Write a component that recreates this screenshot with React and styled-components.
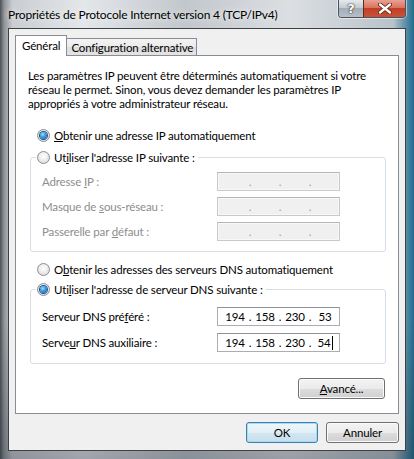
import React from "react";
import styled, { createGlobalStyle, css } from "styled-components";

const Global = createGlobalStyle`
  html, body { margin: 0; padding: 0; background: #ffffff; }
  body { font-family: "Lato", "Noto Sans", sans-serif; font-size: 11.5px; letter-spacing: -0.15px; color: #000; }
  * { box-sizing: border-box; }
`;

const Window = styled.div`
  width: 414px;
  height: 459px;
  display: flex;
  flex-direction: column;
  padding: 0 8px 8px 8px;
  background:
    linear-gradient(to bottom, rgba(255,255,255,0) 0%, rgba(255,255,255,0) 70%, rgba(30,40,50,0.35) 100%),
    linear-gradient(to right, #4d5155 0%, #8f9499 1%, #c9cdd1 3%, #e4e7ea 20%, #c2c7cc 45%, #dcdfe2 70%, #b9c3ca 95%, #5b8ea8 98%, #1f6c8c 100%);
`;

const TitleBar = styled.div`
  height: 28px;
  display: flex;
  align-items: flex-start;
  justify-content: space-between;
  flex-shrink: 0;
`;

const Title = styled.div`
  padding-top: 7px;
  font-size: 12px;
  letter-spacing: -0.2px;
  color: #000;
  text-shadow: 0 0 6px rgba(255,255,255,0.9);
  white-space: nowrap;
`;

const CaptionGroup = styled.div`
  display: flex;
  height: 18px;
  border: 1px solid #4a535c;
  border-top: none;
  border-radius: 0 0 4px 4px;
  overflow: hidden;
  box-shadow: 0 0 0 1px rgba(255,255,255,0.5);
`;

const CaptionButton = styled.div`
  display: flex;
  align-items: center;
  justify-content: center;
  height: 100%;
  width: ${(p) => p.$w}px;
  ${(p) =>
    p.$close
      ? css`
          background: linear-gradient(to bottom, #e8a192 0%, #d8735f 45%, #c23f22 50%, #c8523a 100%);
          border-left: 1px solid #5c2a20;
        `
      : css`
          background: linear-gradient(to bottom, #e6eaee 0%, #c4cbd2 45%, #a4adb6 50%, #b7c0c8 100%);
        `}
`;

const HelpMark = styled.span`
  font-family: "DejaVu Sans", sans-serif;
  font-weight: bold;
  font-size: 13px;
  color: #fff;
  text-shadow: 0 0 1px #333, 0 0 1px #333, 0 0 2px #555;
  line-height: 1;
`;

const Client = styled.div`
  flex: 1;
  display: flex;
  flex-direction: column;
  background: #f0f0f0;
  border: 1px solid #3c4146;
  padding: 6px 6px 7px 6px;
`;

const TabStrip = styled.div`
  display: flex;
  align-items: flex-end;
  height: 20px;
  position: relative;
  z-index: 1;
`;

const Tab = styled.div`
  display: flex;
  align-items: center;
  border: 1px solid #898c95;
  border-bottom: none;
  white-space: nowrap;
  ${(p) =>
    p.$active
      ? css`
          height: 21px;
          margin-bottom: -1px;
          padding: 0 6px 2px 6px;
          background: #ffffff;
        `
      : css`
          height: 17px;
          padding: 0 3px 0 4px;
          border-left: none;
          background: linear-gradient(to bottom, #f3f3f3 0%, #ebebeb 50%, #dedede 51%, #e3e3e3 100%);
        `}
`;

const Panel = styled.div`
  flex: 1;
  background: #ffffff;
  border: 1px solid #898c95;
  padding: 13px 12px 14px 12px;
  display: flex;
  flex-direction: column;
`;

const Intro = styled.p`
  margin: 0;
  line-height: 14px;
  white-space: nowrap;
`;

const RadioRow = styled.label`
  display: flex;
  align-items: center;
  gap: 4px;
  height: 14px;
  margin-top: ${(p) => p.$mt}px;
  margin-left: ${(p) => p.$ml}px;
  white-space: nowrap;
`;

const RadioCircle = styled.span`
  width: 13px;
  height: 13px;
  border-radius: 50%;
  border: 1px solid #8a8f95;
  background: radial-gradient(circle at 50% 40%, #ffffff 0%, #f2f2f2 35%, #cfd2d5 100%);
  display: flex;
  align-items: center;
  justify-content: center;
  flex-shrink: 0;
  &::after {
    content: "";
    display: ${(p) => (p.$checked ? "block" : "none")};
    width: 7px;
    height: 7px;
    border-radius: 50%;
    background: radial-gradient(circle at 40% 35%, #a6e0ff 0%, #3d9be0 40%, #0f56a3 100%);
    box-shadow: 0 0 0 1px #1d4f86;
  }
`;

const Acc = styled.span`
  text-decoration: underline;
`;

const Group = styled.fieldset`
  margin: ${(p) => p.$mt}px 0 0 2px;
  width: 356px;
  min-inline-size: 0;
  border: 1px solid #d5dfe5;
  border-radius: 3px;
  padding: ${(p) => p.$pt}px 10px ${(p) => p.$pb}px 11px;
`;

const Legend = styled.legend`
  padding: 0 3px 0 1px;
  margin-left: -6px;
  background: #ffffff;
`;

const FieldGrid = styled.div`
  display: grid;
  grid-template-columns: 175px 123px;
  row-gap: ${(p) => p.$gap}px;
  align-items: center;
`;

const FieldLabel = styled.span`
  color: ${(p) => (p.$disabled ? "#8d8d8d" : "#000")};
  white-space: nowrap;
`;

const IpBox = styled.div`
  height: 19px;
  display: flex;
  align-items: center;
  padding-left: 5px;
  border: 1px solid ${(p) => (p.$disabled ? "#c9c9c9" : "#abadb3")};
  border-top-color: ${(p) => (p.$disabled ? "#b5b5b5" : "#8e9198")};
  background: ${(p) => (p.$disabled ? "#f0f0f0" : "#ffffff")};
  box-shadow: ${(p) => (p.$disabled ? "inset 0 0 0 1px #f8f8f8" : "none")};
`;

const Octet = styled.span`
  width: 24px;
  display: flex;
  align-items: center;
  justify-content: center;
  white-space: nowrap;
`;

const Dot = styled.span`
  width: 6px;
  text-align: center;
  color: ${(p) => (p.$disabled ? "#a0a0a0" : "#000")};
`;

const Caret = styled.span`
  display: inline-block;
  width: 1px;
  height: 14px;
  background: #000;
  margin-left: 1px;
`;

const BtnRow = styled.div`
  display: flex;
  justify-content: flex-end;
  gap: 8px;
  margin-top: ${(p) => p.$mt}px;
  margin-right: ${(p) => p.$mr}px;
`;

const Button = styled.div`
  width: ${(p) => p.$w}px;
  height: 21px;
  display: flex;
  align-items: center;
  justify-content: center;
  border-radius: 3px;
  ${(p) =>
    p.$default
      ? css`
          border: 1px solid #3c7fb1;
          box-shadow: inset 0 0 0 1px #a9dcf3;
          background: linear-gradient(to bottom, #eef6fa 0%, #e2eff6 50%, #d3e6f0 51%, #c8dfec 100%);
        `
      : css`
          border: 1px solid #707070;
          box-shadow: inset 0 0 0 1px #fbfbfb;
          background: linear-gradient(to bottom, #f3f3f3 0%, #ebebeb 50%, #dddddd 51%, #cfcfcf 100%);
        `}
`;

function Radio({ checked }) {
  return <RadioCircle $checked={checked} />;
}

function IpField({ values, disabled, caret }) {
  const parts = values || ["", "", "", ""];
  return (
    <IpBox $disabled={disabled}>
      {parts.map((v, i) => (
        <React.Fragment key={i}>
          <Octet>
            {v ? <span>{v}</span> : null}
            {caret && i === 3 ? <Caret /> : null}
          </Octet>
          {i < 3 ? <Dot $disabled={disabled}>.</Dot> : null}
        </React.Fragment>
      ))}
    </IpBox>
  );
}

export default function App() {
  return (
    <>
      <Global />
      <Window>
        <TitleBar>
          <Title>Propriétés de Protocole Internet version 4 (TCP/IPv4)</Title>
          <CaptionGroup>
            <CaptionButton $w={24}>
              <HelpMark>?</HelpMark>
            </CaptionButton>
            <CaptionButton $w={42} $close>
              <svg width="14" height="11" viewBox="0 0 14 11">
                <path d="M2 1.5 L12 9.5 M12 1.5 L2 9.5" stroke="#5a1d12" strokeWidth="4" strokeLinecap="round" />
                <path d="M2 1.5 L12 9.5 M12 1.5 L2 9.5" stroke="#ffffff" strokeWidth="2.4" strokeLinecap="round" />
              </svg>
            </CaptionButton>
          </CaptionGroup>
        </TitleBar>
        <Client>
          <TabStrip>
            <Tab $active>Général</Tab>
            <Tab>Configuration alternative</Tab>
          </TabStrip>
          <Panel>
            <Intro>
              Les paramètres IP peuvent être déterminés automatiquement si votre
              <br />
              réseau le permet. Sinon, vous devez demander les paramètres IP
              <br />
              appropriés à votre administrateur réseau.
            </Intro>
            <RadioRow $mt={17} $ml={9}>
              <Radio checked />
              <span>
                <Acc>O</Acc>btenir une adresse IP automatiquement
              </span>
            </RadioRow>
            <Group $mt={8} $pt={8} $pb={10}>
              <Legend>
                <RadioRow $mt={0} $ml={0}>
                  <Radio />
                  <span>
                    Ut<Acc>i</Acc>liser l'adresse IP suivante :
                  </span>
                </RadioRow>
              </Legend>
              <FieldGrid $gap={6}>
                <FieldLabel $disabled>
                  Adresse <Acc>I</Acc>P :
                </FieldLabel>
                <IpField disabled />
                <FieldLabel $disabled>
                  Masque de <Acc>s</Acc>ous-réseau :
                </FieldLabel>
                <IpField disabled />
                <FieldLabel $disabled>
                  Passerelle par <Acc>d</Acc>éfaut :
                </FieldLabel>
                <IpField disabled />
              </FieldGrid>
            </Group>
            <RadioRow $mt={10} $ml={9}>
              <Radio />
              <span>
                O<Acc>b</Acc>tenir les adresses des serveurs DNS automatiquement
              </span>
            </RadioRow>
            <Group $mt={6} $pt={11} $pb={11}>
              <Legend>
                <RadioRow $mt={0} $ml={0}>
                  <Radio checked />
                  <span>
                    Uti<Acc>l</Acc>iser l'adresse de serveur DNS suivante :
                  </span>
                </RadioRow>
              </Legend>
              <FieldGrid $gap={7}>
                <FieldLabel>
                  Serveur DNS pré<Acc>f</Acc>éré :
                </FieldLabel>
                <IpField values={["194", "158", "230", "53"]} />
                <FieldLabel>
                  Serve<Acc>u</Acc>r DNS auxiliaire :
                </FieldLabel>
                <IpField values={["194", "158", "230", "54"]} caret />
              </FieldGrid>
            </Group>
            <BtnRow $mt={14} $mr={1}>
              <Button $w={87}>
                <span>
                  <Acc>A</Acc>vancé...
                </span>
              </Button>
            </BtnRow>
          </Panel>
          <BtnRow $mt={8} $mr={0}>
            <Button $w={72} $default>
              OK
            </Button>
            <Button $w={73}>Annuler</Button>
          </BtnRow>
        </Client>
      </Window>
    </>
  );
}
